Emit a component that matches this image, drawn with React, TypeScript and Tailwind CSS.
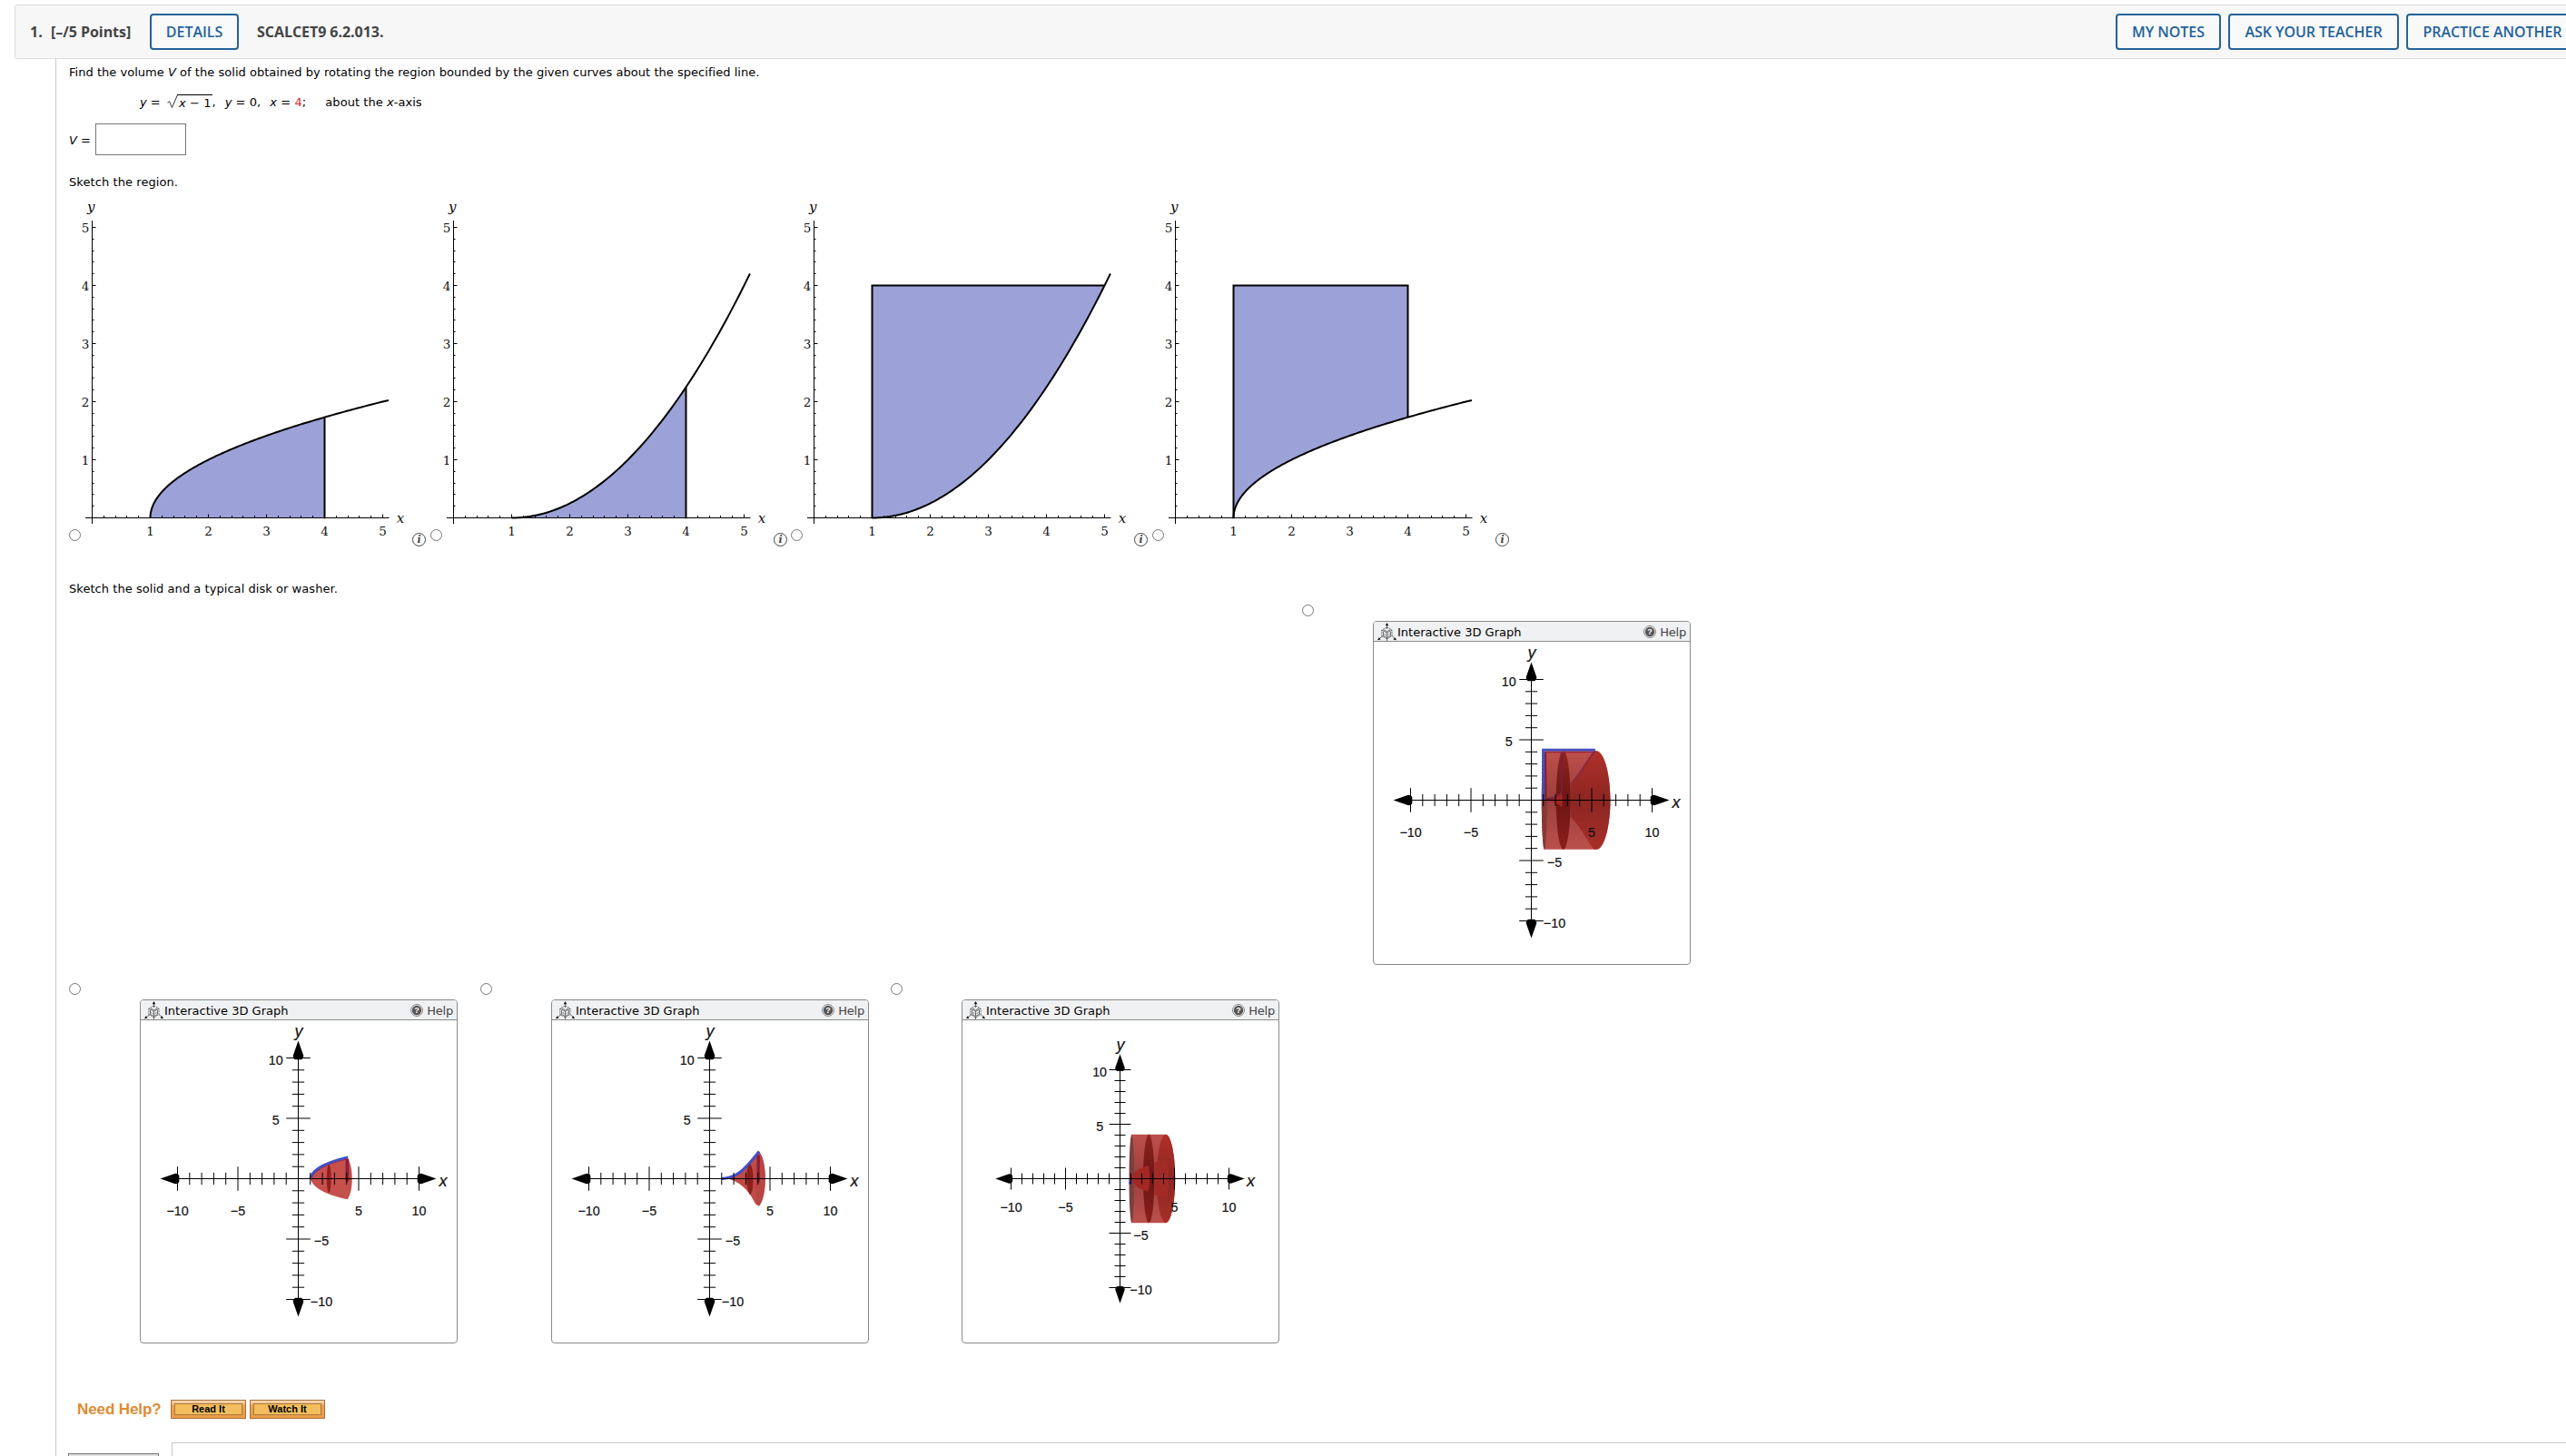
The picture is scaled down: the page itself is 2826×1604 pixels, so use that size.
import React from "react";

const range = (from: number, to: number) =>
  Array.from({ length: to - from + 1 }, (_, i) => from + i);

/* ---------- 2D region plots ---------- */

const U = 64;
const OX = 12.5;
const OY = 334.5;
const px = (x: number) => OX + x * U;
const py = (y: number) => OY - y * U;

function sample(f: (x: number) => number, from: number, to: number) {
  const n = 120;
  return Array.from({ length: n + 1 }, (_, i) => {
    const t = i / n;
    const x = from + (to - from) * t * t;
    return `${px(x).toFixed(2)},${py(f(x)).toFixed(2)}`;
  }).join(" L");
}

const root = (x: number) => Math.sqrt(x - 1);
const square = (x: number) => ((x - 1) * (x - 1)) / 4;

type Region = { f: (x: number) => number; end: number; top: boolean };

const regions: Region[] = [
  { f: root, end: 4, top: false },
  { f: square, end: 4, top: false },
  { f: square, end: 5, top: true },
  { f: root, end: 4, top: true },
];

function RegionPlot({ f, end, top }: Region) {
  const edge = sample(f, 1, end);
  const fill = top
    ? `M${edge} L${px(end)},${py(4)} L${px(1)},${py(4)} Z`
    : `M${edge} L${px(end)},${py(0)} Z`;
  return (
    <svg width="365" height="366" className="block font-['DejaVu_Serif',serif] text-[13.5px]">
      <path d={fill} fill="#9ca1d7" />
      <g stroke="#000" strokeWidth="1">
        <path d={`M5,${OY} H339.5 M${OX},7 V341`} />
        {range(1, 25).map((i) => (
          <path
            key={i}
            d={`M${Math.round(i * 12.8) + OX},${OY} v${i % 5 ? -2.5 : -4} M${OX},${OY - Math.round(i * 12.8)} h${i % 5 ? 2 : 4}`}
          />
        ))}
      </g>
      <g stroke="#000" strokeWidth="2" fill="none">
        <path d={`M${sample(f, 1, 5.1)}`} />
        {!top && <path d={`M${px(end)},${py(f(end))} V${OY + 0.8}`} />}
        {top && end === 5 && <path d={`M${px(5)},${py(4)} H${px(1)} V${OY + 0.8}`} />}
        {top && end === 4 && <path d={`M${px(4)},${py(f(4))} V${py(4)} H${px(1)} V${OY + 0.8}`} />}
      </g>
      <g fill="#111">
        {range(1, 5).map((i) => (
          <React.Fragment key={i}>
            <text x={px(i)} y={OY + 19.7} textAnchor="middle">{i}</text>
            <text x="5" y={py(i) + 5.5} textAnchor="middle">{i}</text>
          </React.Fragment>
        ))}
        <text x="352" y="339.7" textAnchor="middle" fontStyle="italic" fontSize="15">x</text>
      </g>
    </svg>
  );
}

function Radio() {
  return <span className="block h-[13px] w-[13px] shrink-0 rounded-full border border-[#767676] bg-white" />;
}

function InfoIcon() {
  return (
    <span className="flex h-[15px] w-[15px] shrink-0 items-center justify-center rounded-full border border-[#444] font-['DejaVu_Serif',serif] text-[11px] font-bold italic leading-none text-[#444]">
      i
    </span>
  );
}

/* ---------- 3D graph panels ---------- */

type Solid = "bowl" | "horn" | "drum" | "cup";

function Shape({ kind }: { kind: Solid }) {
  if (kind === "bowl") {
    return (
      <g>
        <path d="M13.3,0 C17,-12 34,-18.5 54,-23 C57.5,-19 59.3,-9 59.3,0 C59.3,9 57.5,19 54,22.7 C34,18.5 17,12 13.3,0Z" fill="#c6504c" />
        <ellipse cx="33.7" cy="0" rx="2.4" ry="15.6" fill="#941f1c" />
        <path d="M52,-22 H55.5 L56,-2 H52Z" fill="#8f1e3c" />
        <path d="M52,-2 H56 V3 H52Z" fill="#941f1c" />
        <path d="M14,0 C18,-11 34,-17 53.5,-21.5" fill="none" stroke="#962a4c" strokeWidth="1.2" />
        <path d="M13,0 C16,-12 34,-18.7 54.5,-23.7" fill="none" stroke="#3f4fc9" strokeWidth="2.6" />
      </g>
    );
  }
  if (kind === "horn") {
    return (
      <g>
        <path d="M20,0 C32,-4 42,-14 54.5,-30 C59,-25 61.3,-12 61.3,0 C61.3,12 59,25 54.5,30 C51,30 49,25 45,18 C38,8 29,2 20,0Z" fill="#c04c48" />
        <path d="M54.5,-29 C59,-25 61.3,-12 61.3,0 C61.3,12 59,25 54.5,30 C48,20 48,-20 54.5,-29Z" fill="#b84642" />
        <path d="M43,-16 C46,-19 48,-9 48,0 C48,9 47,16 44.5,18 C40,11 40,-9 43,-16Z" fill="#8c1e1b" />
        <path d="M52,-26 H55.5 V4 H52Z" fill="#8f2038" />
        <path d="M13.5,0 C30,-1 38,-9 54.5,-30" fill="none" stroke="#3f4fc9" strokeWidth="3" />
      </g>
    );
  }
  if (kind === "drum") {
    return (
      <g>
        <path d="M12.5,-48.7 H50 C56.5,-48.7 60.7,-24 60.7,0 C60.7,24 56.5,48.7 50,48.7 H12.5Z" fill="url(#lateral)" />
        <ellipse cx="12.8" cy="0" rx="2.8" ry="48.5" fill="#7b3f40" />
        <ellipse cx="50.5" cy="0" rx="10.2" ry="48.7" fill="url(#face)" />
        <ellipse cx="31.7" cy="0" rx="6.2" ry="48.7" fill="url(#disk)" />
        <path d="M38,-18 C43,-19 46,-20 52,-20.5 C54,-8 54,8 52,20.5 C46,20 43,19 38,18Z" fill="#a32b27" />
        <path d="M12,0 C15,-8 22,-12 31,-14.5 C33.5,-8 33.5,8 31,14 C22,12 15,8 12,0Z" fill="#a32824" />
        <path d="M9.5,6 L10.5,0 H12.5 V6Z" fill="#3f3fa8" />
      </g>
    );
  }
  return (
    <g>
      <path d="M14,-54.3 H71 C81,-54.3 87,-26 87,0 C87,26 81,54.3 71,54.3 H14 C10.5,40 10.5,-40 14,-54.3Z" fill="url(#lateral)" />
      <path d="M70.3,-54.3 H72 C81,-53 87,-26 87,0 C87,26 81,54 72,54.3 H69 C61,45 57,33 43.5,18.5 V-17 C57,-31 62,-45 70.3,-54.3Z" fill="url(#face)" />
      <path d="M70,-54 C61,-43 56,-31 43.5,-17.5" fill="none" stroke="#8e2a3d" strokeWidth="2.4" />
      <ellipse cx="14.3" cy="0" rx="3" ry="54.3" fill="#853937" />
      <ellipse cx="35.2" cy="0" rx="8" ry="54.3" fill="url(#disk)" />
      <path d="M14,0 C24,-1 28,-3 33.5,-8 C35,-2 35,3 33.5,7.5 C28,3 24,1 14,0Z" fill="#a02722" />
      <path d="M33.2,-53 V-8 C28,-3 24,-2 15,-1" fill="none" stroke="#76203c" strokeWidth="2" />
      <path d="M16,-53 H70" stroke="#9a2440" strokeWidth="1.6" />
      <path d="M15.8,-53 V-2" stroke="#7c2038" strokeWidth="1.6" />
      <path d="M13,0 V-55.3 H70.3" fill="none" stroke="#4250bd" strokeWidth="2.8" />
    </g>
  );
}

function Arrow({ turn, u }: { turn: number; u: number }) {
  const k = u / 13.3;
  return (
    <path
      transform={`rotate(${turn}) scale(${k})`}
      d="M152,0 L135.5,-5.8 Q131.5,-5.4 131.2,-3 V3 Q131.5,5.4 135.5,5.8Z"
      fill="#000"
    />
  );
}

function Axes({ u }: { u: number }) {
  const ticks = range(-10, 10).filter((i) => i !== 0);
  const k = u / 13.3;
  return (
    <g>
      <g stroke="#000" strokeWidth="1">
        <path d={`M${-11 * u},0 H${11 * u} M0,${-11 * u} V${11 * u}`} />
        {ticks.map((i) => {
          const h = i % 5 ? u / 2 : u;
          return <path key={i} d={`M${i * u},${-h} V${h} M${-h},${i * u} H${h}`} />;
        })}
      </g>
      {[0, 90, 180, 270].map((t) => (
        <Arrow key={t} turn={t} u={u} />
      ))}
      <g fill="#111" stroke="#111" strokeWidth="0.2" fontSize="14.3" textAnchor="middle">
        {[-10, -5, 5, 10].map((v) => {
          const label = v < 0 ? `−${-v}` : `${v}`;
          return (
            <React.Fragment key={v}>
              <text x={v * u} y={u * 3.06}>{label}</text>
              <text x={v < 0 ? 25.5 * k : -24.8 * k} y={-v * u + 7}>{label}</text>
            </React.Fragment>
          );
        })}
        <text x={12 * u} y="8.7" fontSize="18" fontStyle="italic">x</text>
        <text x="0.5" y={-11.8 * u} fontSize="18" fontStyle="italic">y</text>
      </g>
    </g>
  );
}

function CubeIcon() {
  return (
    <svg width="22" height="21" viewBox="0 0 22 21" className="block overflow-visible">
      <g fill="none" stroke="#333" strokeWidth="0.7">
        <path d="M10.5,1 V7 M1,18.5 L6,14.5 M20.5,18.5 L16,14.5" />
        <path d="M10.5,5 L16,8 V14.5 L10.5,18 L4.8,14.5 V8Z" strokeDasharray="2 0.8" />
        <path d="M5,8.2 L10.5,11.2 L16,8.2 M10.5,11 V20 M6.5,10 V14.3 L10,16.3 M14.5,10 V14.3 L11,16.3 M7,7.8 L10.5,9.8 L14,7.8" />
        <path d="M7.5,12.5 L9.5,13.6 M13.5,12.5 L11.5,13.6" />
      </g>
      <path d="M10.5,0 L12.3,3.2 H8.7Z M0,19.3 L1.6,16.3 L3.6,18.6Z M21,19.3 L19.4,16.3 L17.4,18.6Z" fill="#111" />
    </svg>
  );
}

function HelpIcon() {
  return (
    <svg width="14" height="14" viewBox="0 0 14 14" className="block">
      <circle cx="7" cy="7" r="6.4" fill="#fff" stroke="#777" strokeWidth="1" />
      <circle cx="7" cy="7" r="5.2" fill="#555" />
      <text x="7" y="10.2" textAnchor="middle" fontSize="9" fontWeight="bold" fill="#fff" className="font-['Liberation_Sans',sans-serif]">
        ?
      </text>
    </svg>
  );
}

function GraphOption({ kind, u }: { kind: Solid; u: number }) {
  return (
    <div>
      <Radio />
      <div className="mt-[5px] ml-[78px] h-[379px] w-[350px] overflow-hidden rounded-[4px] border border-[#8a8a8a] bg-white">
        <div className="flex h-[22px] items-center border-b border-[#8a8a8a] bg-[#f0f1f3] pr-1 pl-1">
          <span className="pt-px"><CubeIcon /></span>
          <span className="pt-[2px] whitespace-nowrap text-black">Interactive 3D Graph</span>
          <span className="ml-auto flex items-center gap-1 text-[13px] text-[#444]">
            <HelpIcon />
            <span className="pt-[2px] tracking-[-0.2px]">Help</span>
          </span>
        </div>
        <svg width="348" height="355" className="block font-['Liberation_Sans',sans-serif]">
          <defs>
            <linearGradient id="lateral" x1="0" y1="0" x2="0" y2="1">
              <stop offset="0" stopColor="#bd4f4b" />
              <stop offset="0.5" stopColor="#9c3f3c" />
              <stop offset="1" stopColor="#ba504c" />
            </linearGradient>
            <linearGradient id="face" x1="0" y1="0" x2="0" y2="1">
              <stop offset="0" stopColor="#b0302a" />
              <stop offset="0.5" stopColor="#8c2622" />
              <stop offset="1" stopColor="#a82f2a" />
            </linearGradient>
            <linearGradient id="disk" x1="0" y1="0" x2="0" y2="1">
              <stop offset="0" stopColor="#8f241f" />
              <stop offset="0.5" stopColor="#6e1512" />
              <stop offset="1" stopColor="#8a1f1b" />
            </linearGradient>
          </defs>
          <g transform="translate(173.5 174.5)">
            <Shape kind={kind} />
            <Axes u={u} />
          </g>
        </svg>
      </div>
    </div>
  );
}

/* ---------- page chrome ---------- */

function HeaderButton({ children, className = "" }: { children: React.ReactNode; className?: string }) {
  return (
    <button
      className={`flex h-10 shrink-0 items-center justify-center rounded-[4px] border-2 border-[#23629a] bg-[#f9f9f9] text-base font-semibold tracking-[-0.05px] whitespace-nowrap text-[#23629a] ${className}`}
    >
      {children}
    </button>
  );
}

function GoldButton({ children }: { children: string }) {
  return (
    <button className="h-[21px] w-[83px] border border-[#a9703a] bg-linear-to-b from-[#fbe0c0] via-[#ec9f50] via-30% to-[#ec9c48] p-[3px]">
      <span className="flex h-full items-center justify-center border border-[#a9783c] bg-[#f3bf5e] font-['Liberation_Sans',sans-serif] text-[11px] leading-none font-bold text-black">
        {children}
      </span>
    </button>
  );
}

export default function App() {
  return (
    <div className="h-[1604px] w-full overflow-hidden bg-white pt-[5px] font-['DejaVu_Sans',sans-serif] text-[13px] leading-5 text-black">
      <header className="ml-4 flex h-[60px] w-[2900px] items-center rounded-[3px] border border-[#dcdcdc] bg-[#f7f7f7] pl-4 font-['Open_Sans',sans-serif] text-base font-bold text-[#444]">
        <span className="w-[23px]">1.</span>
        <span className="w-[109px] tracking-[-0.05px]">[–/5 Points]</span>
        <HeaderButton className="w-[98px]">DETAILS</HeaderButton>
        <span className="ml-5 w-[2047px] tracking-[-0.05px]">SCALCET9 6.2.013.</span>
        <HeaderButton className="w-[116px]">MY NOTES</HeaderButton>
        <HeaderButton className="ml-2 w-[188px]">ASK YOUR TEACHER</HeaderButton>
        <HeaderButton className="ml-2 w-[190px]">PRACTICE ANOTHER</HeaderButton>
      </header>

      <main className="ml-[61px] h-[1540px] border-l border-[#c8c8c8] pl-[14px]">
        <p className="pt-[5px] tracking-[0.03px]">
          Find the volume <i>V</i> of the solid obtained by rotating the region bounded by the given curves about the
          specified line.
        </p>

        <div className="mt-[13px] ml-[78px] flex h-5 whitespace-pre">
          <span><i>y</i> = </span>
          <span className="ml-[3px] flex">
            <svg width="12" height="20" className="-mr-px block overflow-visible">
              <path d="M0.5,10 L2.5,8.8 L5.5,15.5 L11.5,1.5" fill="none" stroke="#333" strokeWidth="1" />
            </svg>
            <span className="mt-px h-[19px] border-t border-black pr-px pl-0.5 leading-[17px] tracking-[0.1px]">
              <i>x</i> − 1
            </span>
          </span>
          <span>,</span>
          <span className="ml-2.5 tracking-[0.05px]"><i>y</i> = 0,</span>
          <span className="ml-2.5 tracking-[0.1px]"><i>x</i> = <span className="text-[#e0271b]">4</span>;</span>
          <span className="ml-[21px] tracking-[0.05px]">about the <i>x</i>-axis</span>
        </div>

        <div className="mt-[13px] flex h-[35px] items-center">
          <span className="w-[29px] pt-0.5 whitespace-pre"><i>V</i> =</span>
          <span className="block h-[35px] w-[100px] border border-[#767676] bg-white" />
        </div>

        <p className="mt-5 tracking-[0.08px]">Sketch the region.</p>

        <div className="grid grid-cols-[398px_397px_398px_398px]">
          {regions.map((r, i) => (
            <div key={i}>
              <div className="h-[25px] pt-[7px] pl-5 font-['DejaVu_Serif',serif] text-[15px] italic">y</div>
              <div className="flex items-end">
                <span className="mb-[6px]"><Radio /></span>
                <RegionPlot {...r} />
                <InfoIcon />
              </div>
            </div>
          ))}
        </div>

        <p className="mt-[37px] tracking-[0.05px]">Sketch the solid and a typical disk or washer.</p>

        <div className="mt-[7px] grid grid-cols-[453px_452px_453px_453px] gap-y-5">
          <div className="col-start-4"><GraphOption kind="cup" u={13.3} /></div>
          <div className="col-start-1"><GraphOption kind="bowl" u={13.3} /></div>
          <GraphOption kind="horn" u={13.3} />
          <GraphOption kind="drum" u={12} />
        </div>

        <div className="mt-[62px] ml-2 flex h-[21px] items-center">
          <span className="w-[104px] pl-px font-['Liberation_Sans',sans-serif] text-[17px] font-bold tracking-[-0.1px] text-[#e08a30]">
            Need Help?
          </span>
          <div className="flex gap-1">
            <GoldButton>Read It</GoldButton>
            <GoldButton>Watch It</GoldButton>
          </div>
        </div>

        <div className="mt-[26px] flex items-start">
          <div className="mt-3 -ml-px h-8 w-[100px] border border-[#767676] bg-[#e1e1e1]" />
          <div className="ml-[14px] h-12 flex-1 border-t border-l border-[#c8c8c8]" />
        </div>
      </main>
    </div>
  );
}
